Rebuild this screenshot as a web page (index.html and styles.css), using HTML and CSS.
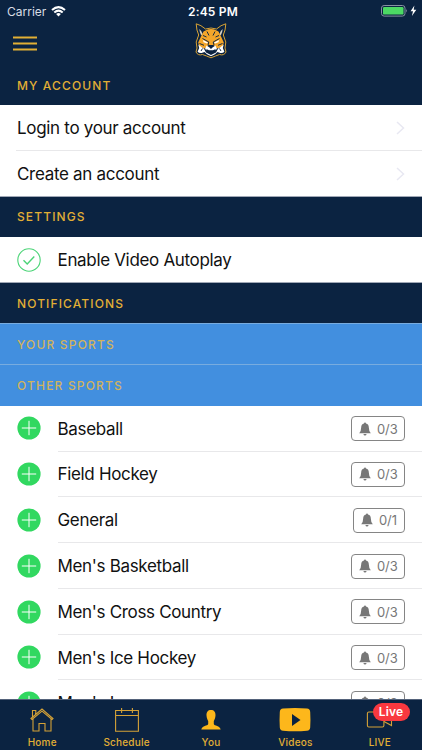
FILE: index.html
```html
<!DOCTYPE html>
<html lang="en">
<head>
<meta charset="utf-8">
<title>Settings</title>
<link rel="stylesheet" href="styles.css">
</head>
<body>
<svg width="0" height="0" class="defs">
  <symbol id="bell" viewBox="0 0 12 14"><path d="M6 0.4Q7 .4 7 1.5Q9.8 2.3 9.8 5.2Q9.8 9 11.8 11.2H.2Q2.2 9 2.2 5.2Q2.2 2.3 5 1.5Q5 .4 6 .4ZM4.4 12H7.6Q7.3 13.5 6 13.5T4.4 12Z" fill="#777"/></symbol>
  <symbol id="plus" viewBox="0 0 24 24"><circle cx="12" cy="12" r="11.6" fill="#31d860"/><path d="M12 4.8V19.2M4.8 12H19.2" stroke="#fff" stroke-width="1"/></symbol>
  <symbol id="chev" viewBox="0 0 9 14"><path d="M1 1L7.5 7L1 13" fill="none" stroke="#e8e8f2" stroke-width="1.5"/></symbol>
</svg>
<div class="app">
  <header class="top">
    <div class="status">
      <div class="carrier"><span>Carrier</span>
        <svg width="15" height="11" viewBox="0 0 15 11"><g fill="none" stroke="#fff" stroke-width="2"><path d="M1 4.1Q7.5 -1.8 14 4.1"/><path d="M3.3 6.5Q7.5 2.7 11.7 6.5"/></g><path d="M5.1 8.1Q7.5 6.1 9.9 8.1L7.5 10.6Z" fill="#fff"/></svg>
      </div>
      <div class="time">2:45 PM</div>
      <div class="power">
        <svg width="37" height="12" viewBox="0 0 37 12"><rect x=".5" y=".5" width="23.5" height="10.6" rx="2.6" fill="none" stroke="#8792a2"/><rect x="2" y="2" width="20.5" height="7.6" rx="1.2" fill="#4cd964"/><path d="M25.2 4Q27 5.8 25.2 7.6Z" fill="#8792a2"/><path d="M33.4 .4L29.6 6.3H32L30.9 11L35.3 4.7H32.7Z" fill="#fff"/></svg>
      </div>
    </div>
    <div class="nav">
      <svg class="menu" width="24" height="16" viewBox="0 0 24 16"><path d="M0 1.5H24M0 7.5H24M0 13.5H24" stroke="#e2af35" stroke-width="1.8"/></svg>
      <svg class="logo" width="32" height="36" viewBox="0 0 32 36">
        <path d="M1.2 .8Q6 2 10.5 6Q16 4 21.5 6Q26 2 30.8 .8Q30.6 7.5 28.3 12L30.8 19L30 25L31 29Q29 33 24.5 31.5L20.5 33L16 34.8L11.5 33L7.5 31.5Q3 33 1 29L2 25L1.2 19L3.7 12Q1.4 7.5 1.2 .8Z" fill="#0b2341" stroke="#d9a335" stroke-width="1"/>
        <path d="M4.3 6Q7 8 7.5 11L6.2 12.5Q4.6 9.5 4.3 6ZM27.7 6Q25 8 24.5 11L25.8 12.5Q27.4 9.5 27.7 6Z" fill="#d9d3c4"/>
        <path d="M8.5 8.5L11 7.2Q16 5 21 7.2L23.5 8.5L26 13.5L28.8 19.5L27.5 24L22 25.5L18.5 22H13.5L10 25.5L4.5 24L3.2 19.5L6 13.5Z" fill="#f4a62a"/>
        <path d="M3.3 21.5L6.3 24L8.8 25.5L11 29.5L16 32L21 29.5L23.2 25.5L25.7 24L28.7 21.5L27.8 25L29.4 28.8Q27 31 24 29.5L22.5 29L20 31.2L16 33.3L12 31.2L9.5 29L8 29.5Q5 31 2.6 28.8L4.2 25Z" fill="#fff"/>
        <path d="M8 17L13 19.5L12 20.6L8.5 19.2ZM24 17L19 19.5L20 20.6L23.5 19.2ZM11.5 22.5L14.5 24.5L16 26L17.5 24.5L20.5 22.5L22 26L19 28H13L10 26Z" fill="#fff"/>
        <path d="M12 8.5L14 12.5M20 8.5L18 12.5M7.5 15.5L13.8 19L13 22M24.5 15.5L18.2 19L19 22M8 12.5L11.5 14M24 12.5L20.5 14M4.5 20.5L9 22.3M27.5 20.5L23 22.3M7.5 25.5L6 28M24.5 25.5L26 28" fill="none" stroke="#0b2341" stroke-width=".95"/>
        <path d="M13.8 22.5H18.2L16 24.8ZM11.3 26L14 27.2H18L20.7 26L19 30L17.3 28.8H14.7L13 30Z" fill="#0b2341"/>
      </svg>
    </div>
  </header>
  <main>
    <h2 class="sec first">MY ACCOUNT</h2>
    <div class="row acct"><span>Login to your account</span><svg width="9" height="14"><use href="#chev"/></svg></div>
    <div class="row acct last"><span>Create an account</span><svg width="9" height="14"><use href="#chev"/></svg></div>
    <h2 class="sec">SETTINGS</h2>
    <div class="row toggle"><svg width="24" height="24" viewBox="0 0 24 24" fill="none" stroke="#4bd477" stroke-width="1.1"><circle cx="12" cy="12" r="11.2"/><path d="M6.5 12.3L10.2 16L17.3 8.4" stroke-width="1.4"/></svg><span>Enable Video Autoplay</span></div>
    <h2 class="sec">NOTIFICATIONS</h2>
    <h2 class="sec blue">YOUR SPORTS</h2>
    <h2 class="sec blue other">OTHER SPORTS</h2>
    <div class="row sport"><svg width="24" height="24"><use href="#plus"/></svg><div class="cell"><span>Baseball</span><b class="count"><svg width="12" height="14"><use href="#bell"/></svg>0/3</b></div></div>
    <div class="row sport"><svg width="24" height="24"><use href="#plus"/></svg><div class="cell"><span>Field Hockey</span><b class="count"><svg width="12" height="14"><use href="#bell"/></svg>0/3</b></div></div>
    <div class="row sport"><svg width="24" height="24"><use href="#plus"/></svg><div class="cell"><span>General</span><b class="count one"><svg width="12" height="14"><use href="#bell"/></svg>0/1</b></div></div>
    <div class="row sport"><svg width="24" height="24"><use href="#plus"/></svg><div class="cell"><span>Men's Basketball</span><b class="count"><svg width="12" height="14"><use href="#bell"/></svg>0/3</b></div></div>
    <div class="row sport"><svg width="24" height="24"><use href="#plus"/></svg><div class="cell"><span>Men's Cross Country</span><b class="count"><svg width="12" height="14"><use href="#bell"/></svg>0/3</b></div></div>
    <div class="row sport"><svg width="24" height="24"><use href="#plus"/></svg><div class="cell"><span>Men's Ice Hockey</span><b class="count"><svg width="12" height="14"><use href="#bell"/></svg>0/3</b></div></div>
    <div class="row sport"><svg width="24" height="24"><use href="#plus"/></svg><div class="cell"><span>Men's Lacrosse</span><b class="count"><svg width="12" height="14"><use href="#bell"/></svg>0/3</b></div></div>
  </main>
  <nav class="tabs">
    <div class="tab"><svg width="24" height="26" viewBox="0 0 24 26" fill="none" stroke="#d5a237" stroke-width="1.1"><path d="M1 11.5L12 2L23 11.5L22 12.5L12 4.2L2 12.5ZM3 12V24H9V16.5H15V24H21V12M2.5 10V3.5H5.8V7"/></svg><span>Home</span></div>
    <div class="tab"><svg width="24" height="26" viewBox="0 0 24 26" fill="none" stroke="#d5a237" stroke-width="1.1"><path d="M.6 3.5H23.4V24.2H.6ZM.6 8.5H23.4M6.6 1V6M17.4 1V6"/></svg><span>Schedule</span></div>
    <div class="tab"><svg width="24" height="26" viewBox="0 0 24 26"><path d="M12 3C15 3 16.7 5 16.5 8.5C16.3 11.5 15.2 13.2 14.8 14V17C15.4 19 20.8 18.5 21.7 22.5H2.3C3.2 18.5 8.6 19 9.2 17V14C8.8 13.2 7.7 11.5 7.5 8.5C7.3 5 9 3 12 3Z" fill="#fdb71b"/></svg><span>You</span></div>
    <div class="tab"><svg width="32" height="26" viewBox="0 0 32 26"><path d="M4 1.6Q16 .6 28 1.6Q31 1.8 31.2 5Q31.7 13 31.2 20.5Q31 23.6 28 23.8Q16 24.8 4 23.8Q1 23.6.8 20.5Q.3 13 .8 5Q1 1.8 4 1.6Z" fill="#fdb71b"/><path d="M13 7V19L21.5 13Z" fill="#0b2341"/></svg><span>Videos</span></div>
    <div class="tab"><svg width="28" height="26" viewBox="0 0 28 26" fill="none" stroke="#d5a237" stroke-width="1.1"><rect x="1.4" y="5" width="16.5" height="15" rx="1.5"/><path d="M18 10.5L25.5 6.5V18.5L18 14.5"/></svg><span>LIVE</span><i class="live">Live</i></div>
  </nav>
</div>
</body>
</html>
```
FILE: styles.css
```css
* { box-sizing: border-box; }
body { margin: 0; font-family: Inter, "Liberation Sans", sans-serif; background: #fff; }
.defs { display: block; }
.app { width: 422px; height: 750px; overflow: hidden; display: flex; flex-direction: column; }
svg { flex: none; display: block; }
.top { background: #0b2341; height: 64.5px; flex: none; }
.status { height: 22px; display: grid; grid-template-columns: 1fr auto 1fr; align-items: center; color: #fff; padding: 0 3px 0 7px; }
.carrier { display: flex; gap: 6px; align-items: center; font-size: 12px; letter-spacing: 0; color: #d8dde4; }
.carrier svg { margin-left: -1px; }
.time { font-size: 12px; font-weight: 600; letter-spacing: .2px; }
.power { justify-self: end; margin-right: 1px; }
.nav { height: 42px; display: grid; grid-template-columns: 1fr 32px 1fr; padding: 0 13px; }
.menu { margin-top: 14px; }
.logo { margin-top: 1px; }
main { flex: 1; min-height: 0; overflow: hidden; }
.sec { margin: 0; height: 41px; padding-left: 17px; display: flex; align-items: center; background: #0b2341; color: #e2af35; font-size: 12px; font-weight: 500; letter-spacing: 1.12px; border-top: 1px solid #a0a8b6; }
.sec.first { border-top: 0; height: 40.5px; padding-top: 1px; }
.sec.blue { background: #428fdf; border-color: #78acdf; color: #d0b35d; letter-spacing: 1.18px; }
.sec.other { height: 41.5px; }
.row { display: flex; align-items: center; font-size: 17px; letter-spacing: -.33px; color: #111; }
.acct { height: 45.5px; margin-left: 16px; padding: 2px 17px 0 1px; justify-content: space-between; border-bottom: 1px solid #e8e8ea; letter-spacing: -.31px; }
.acct.last { height: 45px; padding-top: 1px; border: 0; }
.toggle { height: 45.6px; padding: 1.2px 0 0 16.5px; gap: 17px; }
.sport { height: 45.8px; padding-left: 16.5px; gap: 17px; }
.cell { flex: 1; height: 46px; display: flex; align-items: center; justify-content: space-between; border-bottom: 1px solid #e8e8ea; padding: 1.4px 17px 0 0; }
.count { width: 54px; height: 25px; border: 1px solid #858585; border-radius: 4px; display: flex; align-items: center; gap: 6px; padding-left: 7px; font-size: 13px; font-weight: 400; letter-spacing: -.1px; color: #777; }
.count.one { width: 52px; }
.tabs { height: 51px; flex: none; background: #0b2341; border-top: 1px solid #53627a; display: grid; grid-template-columns: repeat(5, 1fr); }
.tab { position: relative; display: flex; flex-direction: column; align-items: center; padding-top: 7px; color: #e2af35; font-size: 10px; font-weight: 500; letter-spacing: .2px; }
.tab span { line-height: 12px; margin-top: 3px; }
.live { position: absolute; left: 35px; top: 3px; width: 37px; height: 18px; border-radius: 9px; background: #f9383f; color: #fff; font-style: normal; font-size: 12px; font-weight: 600; line-height: 18px; text-align: center; }
```
